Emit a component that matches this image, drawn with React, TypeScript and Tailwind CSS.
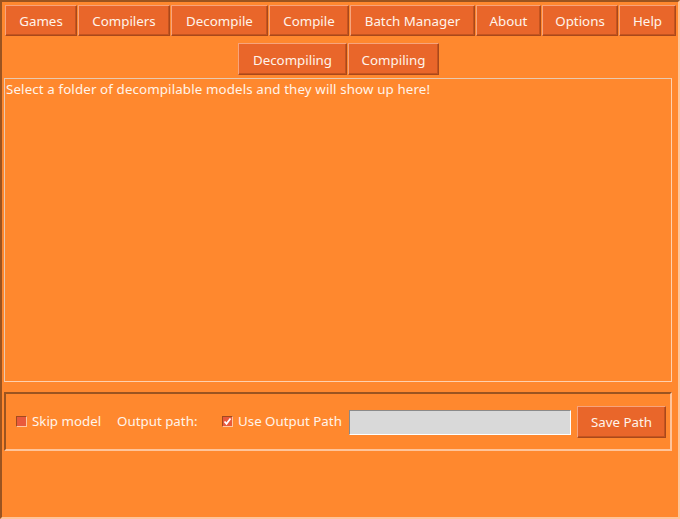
import React from 'react';

const tabs = [
  { label: 'Games', w: 'w-[72px]' },
  { label: 'Compilers', w: 'w-[92px]' },
  { label: 'Decompile', w: 'w-[97px]' },
  { label: 'Compile', w: 'w-[80px]' },
  { label: 'Batch Manager', w: 'w-[125px]' },
  { label: 'About', w: 'w-[65px]' },
  { label: 'Options', w: 'w-[76px]' },
  { label: 'Help', w: 'w-[57px]' },
];

// raised Tk-style button
function TkButton({ label, className = '' }: { label: string; className?: string }) {
  return (
    <button
      className={`flex items-center justify-center bg-[#e9662a] text-[#fff4ea] border border-t-[#f7a47c] border-l-[#f7a47c] border-b-[#a9481b] border-r-[#a9481b] shadow-[inset_-1px_-1px_0_#c4541f] ${className}`}
    >
      {label}
    </button>
  );
}

function CheckBox({ checked }: { checked?: boolean }) {
  return (
    <span className="relative inline-block shrink-0 w-[11px] h-[11px] bg-[#e95a3c] border border-t-[#a24a1e] border-l-[#a24a1e] border-b-[#ffc7a0] border-r-[#ffc7a0]">
      {checked && (
        <svg className="absolute left-0 top-0" width="9" height="9" viewBox="0 0 9 9">
          <path d="M1.5 4.5 L3.5 6.8 L7.5 1.5" fill="none" stroke="#ffffff" strokeWidth="1.8" />
        </svg>
      )}
    </span>
  );
}

export default function App() {
  return (
    <div
      className="w-[680px] h-[519px] bg-[#ff882e] text-[#fff4ea] text-[13.33px] border-2 border-t-[#9b5420] border-l-[#9b5420] border-b-[#ffc49a] border-r-[#ffc49a] overflow-hidden"
      style={{ fontFamily: '"Noto Sans", "Open Sans", sans-serif' }}
    >
      <div className="flex gap-[1px] pl-[3px] pt-[3px]">
        {tabs.map((t) => (
          <TkButton key={t.label} label={t.label} className={`${t.w} h-[31px] pt-[2px]`} />
        ))}
      </div>

      <div className="flex justify-center gap-[1px] mt-[7px] pr-[3px]">
        <TkButton label="Decompiling" className="w-[109px] h-[32px] pt-[3px]" />
        <TkButton label="Compiling" className="w-[91px] h-[32px] pt-[3px]" />
      </div>

      <div className="ml-[2px] mt-[3px] w-[668px] h-[304px] border border-t-[#e8c9b0] border-l-[#e8c9b0] border-b-[#ffd0ad] border-r-[#ffd0ad] px-[1px] pt-[1px] leading-[18px] tracking-[0.12px]">
        Select a folder of decompilable models and they will show up here!
      </div>

      <div className="ml-[2px] mt-[10px] w-[668px] h-[59px] flex items-center pt-[1px] border-2 border-t-[#9b5420] border-l-[#9b5420] border-b-[#ffc49a] border-r-[#ffc49a]">
        <div className="flex items-center ml-[10px] w-[101px]">
          <CheckBox />
          <span className="ml-[5px]">Skip model</span>
        </div>
        <span className="w-[105px]">Output path:</span>
        <div className="flex items-center w-[127px]">
          <CheckBox checked />
          <span className="ml-[5px]">Use Output Path</span>
        </div>
        <input
          className="w-[222px] h-[25px] bg-[#d9d9d9] border border-t-[#8a8a8a] border-l-[#8a8a8a] border-b-[#ffffff] border-r-[#ffffff] outline-none"
          readOnly
        />
        <TkButton label="Save Path" className="ml-[6px] w-[89px] h-[32px] pt-[1px]" />
      </div>
    </div>
  );
}
